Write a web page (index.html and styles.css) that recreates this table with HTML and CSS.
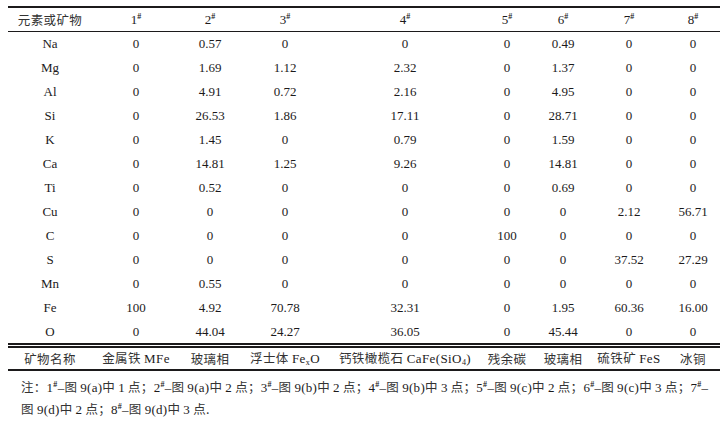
FILE: index.html
```html
<!DOCTYPE html>
<html lang="zh">
<head>
<meta charset="utf-8">
<link rel="stylesheet" href="styles.css">
</head>
<body>
<table class="tbl">
  <colgroup>
    <col class="c1"><col class="c2"><col class="c3"><col class="c4"><col class="c5"><col class="c6"><col class="c7"><col class="c8"><col class="c9">
  </colgroup>
  <thead>
    <tr>
      <th class="cn">元素或矿物</th>
      <th>1<sup class="s">#</sup></th>
      <th>2<sup class="s">#</sup></th>
      <th>3<sup class="s">#</sup></th>
      <th>4<sup class="s">#</sup></th>
      <th>5<sup class="s">#</sup></th>
      <th>6<sup class="s">#</sup></th>
      <th>7<sup class="s">#</sup></th>
      <th>8<sup class="s">#</sup></th>
    </tr>
  </thead>
  <tbody>
    <tr><td>Na</td><td>0</td><td>0.57</td><td>0</td><td>0</td><td>0</td><td>0.49</td><td>0</td><td>0</td></tr>
    <tr><td>Mg</td><td>0</td><td>1.69</td><td>1.12</td><td>2.32</td><td>0</td><td>1.37</td><td>0</td><td>0</td></tr>
    <tr><td>Al</td><td>0</td><td>4.91</td><td>0.72</td><td>2.16</td><td>0</td><td>4.95</td><td>0</td><td>0</td></tr>
    <tr><td>Si</td><td>0</td><td>26.53</td><td>1.86</td><td>17.11</td><td>0</td><td>28.71</td><td>0</td><td>0</td></tr>
    <tr><td>K</td><td>0</td><td>1.45</td><td>0</td><td>0.79</td><td>0</td><td>1.59</td><td>0</td><td>0</td></tr>
    <tr><td>Ca</td><td>0</td><td>14.81</td><td>1.25</td><td>9.26</td><td>0</td><td>14.81</td><td>0</td><td>0</td></tr>
    <tr><td>Ti</td><td>0</td><td>0.52</td><td>0</td><td>0</td><td>0</td><td>0.69</td><td>0</td><td>0</td></tr>
    <tr><td>Cu</td><td>0</td><td>0</td><td>0</td><td>0</td><td>0</td><td>0</td><td>2.12</td><td>56.71</td></tr>
    <tr><td>C</td><td>0</td><td>0</td><td>0</td><td>0</td><td>100</td><td>0</td><td>0</td><td>0</td></tr>
    <tr><td>S</td><td>0</td><td>0</td><td>0</td><td>0</td><td>0</td><td>0</td><td>37.52</td><td>27.29</td></tr>
    <tr><td>Mn</td><td>0</td><td>0.55</td><td>0</td><td>0</td><td>0</td><td>0</td><td>0</td><td>0</td></tr>
    <tr><td>Fe</td><td>100</td><td>4.92</td><td>70.78</td><td>32.31</td><td>0</td><td>1.95</td><td>60.36</td><td>16.00</td></tr>
    <tr class="last"><td>O</td><td>0</td><td>44.04</td><td>24.27</td><td>36.05</td><td>0</td><td>45.44</td><td>0</td><td>0</td></tr>
    <tr class="min">
      <td class="cn">矿物名称</td>
      <td class="cn">金属铁 <span class="lat">MFe</span></td>
      <td class="cn">玻璃相</td>
      <td class="cn">浮士体 <span class="lat">Fe<sub class="sb">x</sub>O</span></td>
      <td class="cn">钙铁橄榄石 <span class="lat">CaFe(SiO<sub class="sb">4</sub>)</span></td>
      <td class="cn">残余碳</td>
      <td class="cn">玻璃相</td>
      <td class="cn">硫铁矿 <span class="lat">FeS</span></td>
      <td class="cn">冰铜</td>
    </tr>
  </tbody>
</table>
<p class="note">注：<span class="lat">1<sup class="s">#</sup>–</span>图 <span class="lat">9(a)</span>中 <span class="lat">1</span> 点；<span class="lat">2<sup class="s">#</sup>–</span>图 <span class="lat">9(a)</span>中 <span class="lat">2</span> 点；<span class="lat">3<sup class="s">#</sup>–</span>图 <span class="lat">9(b)</span>中 <span class="lat">2</span> 点；<span class="lat">4<sup class="s">#</sup>–</span>图 <span class="lat">9(b)</span>中 <span class="lat">3</span> 点；<span class="lat">5<sup class="s">#</sup>–</span>图 <span class="lat">9(c)</span>中 <span class="lat">2</span> 点；<span class="lat">6<sup class="s">#</sup>–</span>图 <span class="lat">9(c)</span>中 <span class="lat">3</span> 点；<span class="lat">7<sup class="s">#</sup>–</span><br>图 <span class="lat">9(d)</span>中 <span class="lat">2</span> 点；<span class="lat">8<sup class="s">#</sup>–</span>图 <span class="lat">9(d)</span>中 <span class="lat">3</span> 点.</p>
</body>
</html>
```
FILE: styles.css
```css
html, body {
  margin: 0;
  padding: 0;
  background: #ffffff;
}
body {
  color: #1c1a1b;
  font-family: "Liberation Serif", "Noto Sans CJK SC", serif;
  font-size: 13px;
}
.tbl {
  margin: 6px 0 0 8px;
  width: 712px;
  table-layout: fixed;
  border-collapse: separate;
  border-spacing: 0;
}
.c1 { width: 84px; }
.c2 { width: 88px; }
.c3 { width: 60px; }
.c4 { width: 90px; }
.c5 { width: 150px; }
.c6 { width: 54px; }
.c7 { width: 58px; }
.c8 { width: 74px; }
.c9 { width: 54px; }
.tbl th, .tbl td {
  padding: 0;
  text-align: center;
  white-space: nowrap;
  font-weight: normal;
}
.tbl th {
  line-height: 23px;
  border-top: 2px solid #1c1a1b;
  border-bottom: 1px solid #1c1a1b;
}
.tbl td {
  line-height: 24px;
}
.tbl .last td {
  line-height: 23px;
  border-bottom: 5px double #1c1a1b;
}
.tbl .min td {
  line-height: 20px;
  border-bottom: 2px solid #1c1a1b;
}
.cn {
  font-family: "Noto Sans CJK SC", sans-serif;
  font-size: 12.5px;
  letter-spacing: 0.4px;
  color: #333;
}
.lat {
  font-family: "Liberation Serif", serif;
  font-size: 13px;
  color: #1c1a1b;
}
.s {
  font-size: 8px;
  font-weight: bold;
  line-height: 0;
  vertical-align: 5px;
}
.sb {
  font-size: 8px;
  line-height: 0;
  vertical-align: -2px;
}
.note {
  margin: 5px 0 0 21px;
  font-family: "Noto Sans CJK SC", sans-serif;
  font-size: 12.5px;
  line-height: 21px;
  color: #333;
  letter-spacing: 0.28px;
  white-space: nowrap;
}
.note .lat {
  letter-spacing: 0.28px;
}
```
